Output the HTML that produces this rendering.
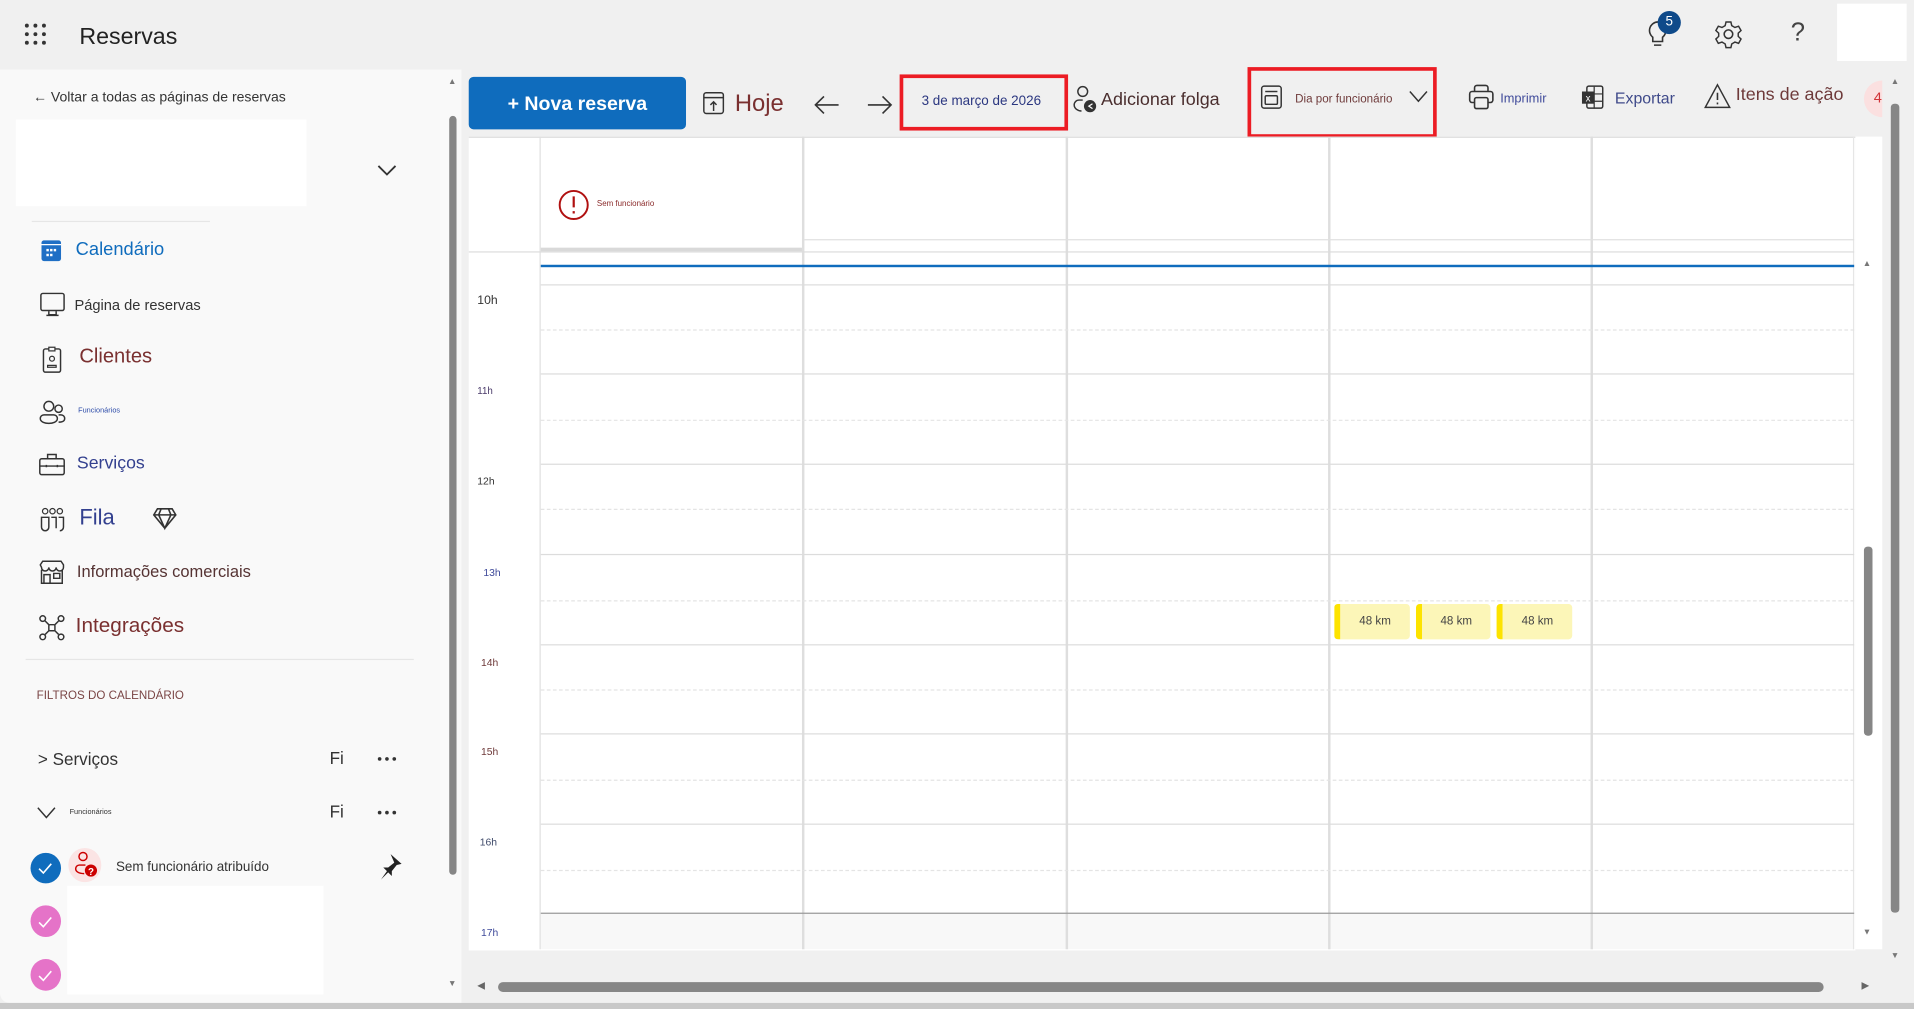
<!DOCTYPE html>
<html><head><meta charset="utf-8">
<style>
html,body{margin:0;padding:0;width:1914px;height:1009px;overflow:hidden;background:#fff;}
#s{position:absolute;left:0;top:0;width:1568px;height:827px;transform-origin:0 0;transform:scale(1.22066,1.2201);background:#f0f0f0;font-family:"Liberation Sans",sans-serif;overflow:hidden;}
.a{position:absolute;white-space:nowrap;}
svg{position:absolute;overflow:visible;}
.hl{position:absolute;left:443px;width:1076px;height:0;border-top:1px solid #dcdcdc;}
.dl{position:absolute;left:443px;width:1076px;height:0;border-top:1px dashed #e4e4e4;}
.vl{position:absolute;top:112px;height:666px;width:0;border-left:2px solid #dedede;}
.tl{position:absolute;left:391px;font-size:9px;}
.ev{position:absolute;top:495px;height:29px;background:#fcf6b8;border-left:5px solid #fde300;border-radius:3px;font-size:9.5px;color:#444;line-height:29px;text-align:center;}
</style></head><body><div id="s">
<!-- header -->
<svg width="20" height="20" style="left:20px;top:19px"><g fill="#333"><circle cx="2" cy="2" r="1.6"/><circle cx="9" cy="2" r="1.6"/><circle cx="16" cy="2" r="1.6"/><circle cx="2" cy="9" r="1.6"/><circle cx="9" cy="9" r="1.6"/><circle cx="16" cy="9" r="1.6"/><circle cx="2" cy="16" r="1.6"/><circle cx="9" cy="16" r="1.6"/><circle cx="16" cy="16" r="1.6"/></g></svg>
<div class="a" style="left:65px;top:20px;font-size:19px;color:#222">Reservas</div>
<svg width="20" height="26" style="left:1348px;top:15px"><path d="M10 3a7 7 0 0 0-4 12.5V19h8v-3.5A7 7 0 0 0 10 3zM7 22h6" fill="none" stroke="#333" stroke-width="1.3"/></svg>
<div class="a" style="left:1358px;top:9px;width:19px;height:19px;border-radius:50%;background:#0f4a8a;color:#fff;font-size:11px;text-align:center;line-height:19px">5</div>
<svg width="24" height="24" style="left:1404px;top:16px"><circle cx="12" cy="12" r="3.5" fill="none" stroke="#333" stroke-width="1.3"/><path d="M10 2h4l.7 3 2.6 1.5 3-1 2 3.5-2.3 2.2v2.6l2.3 2.2-2 3.5-3-1-2.6 1.5-.7 3h-4l-.7-3-2.6-1.5-3 1-2-3.5 2.3-2.2v-2.6L1.7 9l2-3.5 3 1L9.3 5z" fill="none" stroke="#333" stroke-width="1.2"/></svg>
<div class="a" style="left:1467px;top:15px;font-size:21px;color:#444">?</div>
<div class="a" style="left:1505px;top:3px;width:57px;height:47px;background:#fff"></div>
<!-- left panel -->
<div class="a" style="left:0;top:57px;width:378px;height:765px;background:#f9f9f9;border-radius:0 0 0 8px"></div>
<div class="a" style="left:368px;top:95px;width:6px;height:622px;background:#868686;border-radius:3px"></div>
<div class="a" style="left:367px;top:64px;font-size:7px;color:#777">▲</div>
<div class="a" style="left:367px;top:803px;font-size:7px;color:#777">▼</div>
<div class="a" style="left:27px;top:74px;font-size:11.5px;color:#333">← Voltar a todas as páginas de reservas</div>
<div class="a" style="left:13px;top:98px;width:238px;height:71px;background:#fff"></div>
<svg width="16" height="10" style="left:309px;top:135px"><path d="M1 1l7 7 7-7" fill="none" stroke="#333" stroke-width="1.5"/></svg>
<div class="a" style="left:26px;top:181px;width:146px;border-top:1px solid #e6e6e6"></div>
<svg width="18" height="18" style="left:34px;top:197px"><rect x="0" y="0" width="16" height="17" rx="2" fill="#1f6fc5"/><rect x="0" y="3" width="16" height="1" fill="#fff"/><g fill="#fff"><rect x="4" y="7" width="2" height="2"/><rect x="7" y="7" width="2" height="2"/><rect x="10" y="7" width="2" height="2"/><rect x="4" y="11" width="2" height="2"/><rect x="7" y="11" width="2" height="2"/></g></svg>
<div class="a" style="left:62px;top:196px;font-size:15px;color:#0f6cbd">Calendário</div>
<svg width="20" height="20" style="left:33px;top:240px"><rect x="0.5" y="0.5" width="19" height="14" rx="1.5" fill="none" stroke="#333" stroke-width="1.2"/><path d="M7 15v3h6v-3M5 18.5h10" fill="none" stroke="#333" stroke-width="1.2"/></svg>
<div class="a" style="left:61px;top:243px;font-size:12px;color:#333">Página de reservas</div>
<svg width="16" height="22" style="left:35px;top:284px"><rect x="0.6" y="2" width="14" height="19" rx="1.5" fill="none" stroke="#333" stroke-width="1.2"/><rect x="5" y="0.6" width="5" height="3" fill="#f9f9f9" stroke="#333" stroke-width="1"/><circle cx="7.6" cy="10" r="2" fill="none" stroke="#333"/><path d="M4 17v-1.5h7V17z" fill="none" stroke="#333"/></svg>
<div class="a" style="left:65px;top:283px;font-size:16.5px;color:#7a3030">Clientes</div>
<svg width="22" height="20" style="left:32px;top:328px"><circle cx="8" cy="5" r="4" fill="none" stroke="#333" stroke-width="1.2"/><circle cx="16" cy="7" r="3" fill="none" stroke="#333" stroke-width="1.2"/><path d="M1 15a3 3 0 0 1 3-3h8a3 3 0 0 1 3 3c0 3-4 4-7 4s-7-1-7-4zM16 12h2a3 3 0 0 1 3 3c0 2-2 3-5 3" fill="none" stroke="#333" stroke-width="1.2"/></svg>
<div class="a" style="left:64px;top:334px;font-size:6px;color:#2b4aa8">Funcionários</div>
<svg width="22" height="20" style="left:32px;top:371px"><rect x="0.6" y="5" width="20" height="13" rx="1.5" fill="none" stroke="#333" stroke-width="1.2"/><path d="M7 5V1.5h7V5M1 11h20M6 10v2M15 10v2" fill="none" stroke="#333" stroke-width="1.2"/></svg>
<div class="a" style="left:63px;top:372px;font-size:14.5px;color:#33408f">Serviços</div>
<svg width="22" height="20" style="left:33px;top:416px"><circle cx="4" cy="3" r="2.2" fill="none" stroke="#333"/><circle cx="10" cy="3" r="2.2" fill="none" stroke="#333"/><circle cx="16" cy="3" r="2.2" fill="none" stroke="#333"/><path d="M1 8h6v8a3 3 0 0 1-6 0zM9 8h4v9M15 8h4v8a3 3 0 0 1-3 3" fill="none" stroke="#333" stroke-width="1.2"/></svg>
<div class="a" style="left:65px;top:414px;font-size:18px;color:#33408f">Fila</div>
<svg width="20" height="18" style="left:125px;top:416px"><path d="M4 1h12l3 5-9 11L1 6z M1 6h18M7 1l-2 5 5 11 5-11-2-5" fill="none" stroke="#333" stroke-width="1.3"/></svg>
<svg width="22" height="22" style="left:32px;top:459px"><path d="M2 8V19h17V8M1 4l2-3h15l2 3v2a3 3 0 0 1-6 0 3 3 0 0 1-6 0 3 3 0 0 1-6 0z M4 19v-7h5v7M12 11h5v4h-5z" fill="none" stroke="#333" stroke-width="1.2"/></svg>
<div class="a" style="left:63px;top:461px;font-size:13.5px;color:#553333">Informações comerciais</div>
<svg width="22" height="22" style="left:32px;top:504px"><g fill="none" stroke="#333" stroke-width="1.2"><circle cx="3" cy="3" r="2.3"/><circle cx="18" cy="3" r="2.3"/><circle cx="3" cy="18" r="2.3"/><circle cx="18" cy="18" r="2.3"/><rect x="8" y="8" width="5" height="5" rx="1"/><path d="M5 5l3 3M16 5l-3 3M5 16l3-3M16 16l-3-3"/></g></svg>
<div class="a" style="left:62px;top:503px;font-size:17px;color:#7a3030">Integrações</div>
<div class="a" style="left:21px;top:540px;width:318px;border-top:1px solid #e6e6e6"></div>
<div class="a" style="left:30px;top:565px;font-size:9.5px;color:#7a4545">FILTROS DO CALENDÁRIO</div>
<div class="a" style="left:31px;top:614px;font-size:14px;color:#333">&gt; Serviços</div>
<div class="a" style="left:270px;top:613px;font-size:14px;color:#333">Fi</div>
<svg width="20" height="4" style="left:309px;top:620px"><g fill="#333"><circle cx="2" cy="2" r="1.5"/><circle cx="8" cy="2" r="1.5"/><circle cx="14" cy="2" r="1.5"/></g></svg>
<svg width="16" height="10" style="left:30px;top:661px"><path d="M1 1l7 8 7-8" fill="none" stroke="#333" stroke-width="1.2"/></svg>
<div class="a" style="left:57px;top:663px;font-size:6px;color:#333">Funcionários</div>
<div class="a" style="left:270px;top:657px;font-size:14px;color:#333">Fi</div>
<svg width="20" height="4" style="left:309px;top:664px"><g fill="#333"><circle cx="2" cy="2" r="1.5"/><circle cx="8" cy="2" r="1.5"/><circle cx="14" cy="2" r="1.5"/></g></svg>
<div class="a" style="left:25px;top:699px;width:25px;height:25px;border-radius:50%;background:#0f6cbd"></div>
<svg width="12" height="10" style="left:31px;top:707px"><path d="M1 5l3.5 3.5L11 1" fill="none" stroke="#fff" stroke-width="1.3"/></svg>
<div class="a" style="left:56px;top:695px;width:27px;height:28px;border-radius:50%;background:#fbe4e4"></div>
<svg width="20" height="22" style="left:61px;top:698px"><circle cx="7" cy="4" r="3.3" fill="none" stroke="#c00" stroke-width="1.2"/><path d="M9 11H4a3 3 0 0 0-3 3c0 2 2 4 7 4" fill="none" stroke="#c00" stroke-width="1.2"/><circle cx="13.5" cy="15.5" r="5" fill="#c00"/><text x="13.5" y="19" font-size="8" fill="#fff" text-anchor="middle" font-family="Liberation Sans" font-weight="bold">?</text></svg>
<div class="a" style="left:95px;top:705px;font-size:11px;color:#333">Sem funcionário atribuído</div>
<svg width="20" height="22" style="left:310px;top:699px"><path d="M10 1l9 8-4 1-4 5 0 4-3-3-6 6 5-7-3-3 4 0 5-4z" fill="#222"/></svg>
<div class="a" style="left:55px;top:726px;width:210px;height:89px;background:#fff"></div>
<div class="a" style="left:25px;top:742px;width:25px;height:26px;border-radius:50%;background:#e573c8"></div>
<svg width="12" height="10" style="left:31px;top:751px"><path d="M1 5l3.5 3.5L11 1" fill="none" stroke="#fff" stroke-width="1.3"/></svg>
<div class="a" style="left:25px;top:786px;width:25px;height:26px;border-radius:50%;background:#e573c8"></div>
<svg width="12" height="10" style="left:31px;top:795px"><path d="M1 5l3.5 3.5L11 1" fill="none" stroke="#fff" stroke-width="1.3"/></svg>
<div class="a" style="left:0;top:822px;width:1568px;height:5px;background:#c8c8c8"></div>
<!-- toolbar -->
<div class="a" style="left:384px;top:63px;width:178px;height:43px;background:#0f6cbd;border-radius:4px;color:#fff;font-size:16px;font-weight:bold;text-align:center;line-height:45px">+ Nova reserva</div>
<svg width="18" height="20" style="left:576px;top:75px"><rect x="0.6" y="1" width="16" height="17" rx="2" fill="none" stroke="#333" stroke-width="1.2"/><path d="M1 5h16M8.6 16V9M6 11l2.6-2.6L11 11" fill="none" stroke="#333" stroke-width="1.2"/></svg>
<div class="a" style="left:602px;top:74px;font-size:19.5px;color:#7a3030">Hoje</div>
<svg width="22" height="16" style="left:666px;top:78px"><path d="M21 8H2M9 1L2 8l7 7" fill="none" stroke="#333" stroke-width="1.3"/></svg>
<svg width="22" height="16" style="left:710px;top:78px"><path d="M1 8h19M13 1l7 7-7 7" fill="none" stroke="#333" stroke-width="1.3"/></svg>
<div class="a" style="left:737px;top:61px;width:132px;height:40px;border:3px solid #ec1c24"></div>
<div class="a" style="left:755px;top:77px;font-size:11px;color:#2b3780">3 de março de 2026</div>
<svg width="20" height="24" style="left:879px;top:70px"><circle cx="8" cy="5" r="4" fill="none" stroke="#333" stroke-width="1.2"/><path d="M8 12H5a4 4 0 0 0-4 4c0 3 3 5 6 5" fill="none" stroke="#333" stroke-width="1.2"/><circle cx="14" cy="17" r="5" fill="#333"/><path d="M16 15l-3 2 3 2" stroke="#fff" fill="none"/></svg>
<div class="a" style="left:902px;top:74px;font-size:14.7px;color:#4a2e2e">Adicionar folga</div>
<div class="a" style="left:1022px;top:55px;width:149px;height:52px;border:3px solid #ec1c24"></div>
<svg width="18" height="20" style="left:1033px;top:70px"><rect x="0.6" y="0.6" width="16" height="18" rx="2" fill="none" stroke="#333" stroke-width="1.2"/><path d="M3.5 5h10" stroke="#333" stroke-width="1.2"/><rect x="3.5" y="8.5" width="10" height="7" rx="1" fill="none" stroke="#333" stroke-width="1.2"/></svg>
<div class="a" style="left:1061px;top:76px;font-size:9.5px;color:#6e3a3a">Dia por funcionário</div>
<svg width="16" height="10" style="left:1154px;top:74px"><path d="M1 1l7 8 7-8" fill="none" stroke="#333" stroke-width="1.2"/></svg>
<svg width="22" height="22" style="left:1203px;top:69px"><path d="M5 6V3a2 2 0 0 1 2-2h7a2 2 0 0 1 2 2v3M5 15H3a2 2 0 0 1-2-2V8a2 2 0 0 1 2-2h15a2 2 0 0 1 2 2v5a2 2 0 0 1-2 2h-2" fill="none" stroke="#333" stroke-width="1.3"/><rect x="5" y="11" width="11" height="9" rx="1.5" fill="none" stroke="#333" stroke-width="1.3"/></svg>
<div class="a" style="left:1229px;top:75px;font-size:10.5px;color:#3f4a9a">Imprimir</div>
<svg width="18" height="20" style="left:1296px;top:70px"><rect x="4" y="0.6" width="13" height="18" rx="1.5" fill="none" stroke="#333" stroke-width="1.2"/><path d="M10 1v18M4 7h13M4 13h13" stroke="#333"/><rect x="0" y="5" width="10" height="10" fill="#333"/><text x="5" y="13" font-size="8" fill="#fff" text-anchor="middle" font-family="Liberation Sans">x</text></svg>
<div class="a" style="left:1323px;top:73px;font-size:13px;color:#3f4a8a">Exportar</div>
<svg width="22" height="22" style="left:1396px;top:68px"><path d="M11 1.5L21 20H1z" fill="none" stroke="#333" stroke-width="1.2"/><path d="M11 8v6M11 16v1.5" stroke="#333" stroke-width="1.3"/></svg>
<div class="a" style="left:1422px;top:70px;font-size:14.7px;color:#6e3a3a">Itens de ação</div>
<div class="a" style="left:1527px;top:66px;width:30px;height:30px;border-radius:50%;background:#fbe0e0"></div>
<div class="a" style="left:1535px;top:73px;font-size:12px;color:#d13438">4</div>
<div class="a" style="left:1542px;top:57px;width:26px;height:50px;background:#f0f0f0"></div>
<!-- outer right scrollbar -->
<div class="a" style="left:1549px;top:85px;width:7px;height:663px;background:#868686;border-radius:3px"></div>
<div class="a" style="left:1549px;top:64px;font-size:7px;color:#777">▲</div>
<div class="a" style="left:1549px;top:780px;font-size:7px;color:#777">▼</div>
<!-- calendar -->
<div class="a" style="left:384px;top:112px;width:1136px;height:666px;background:#fff;border-top:1px solid #ddd"></div>
<div class="a" style="left:443px;top:748px;width:1076px;height:30px;background:#f8f8f8"></div>
<div class="vl" style="left:442px;border-left:1px solid #e0e0e0"></div>
<div class="vl" style="left:657px"></div>
<div class="vl" style="left:873px"></div>
<div class="vl" style="left:1088px"></div>
<div class="vl" style="left:1303px"></div>
<div class="vl" style="left:1518px;border-left:1px solid #e6e6e6"></div>
<div class="a" style="left:659px;top:196px;width:860px;border-top:1px solid #e0e0e0"></div>
<div class="a" style="left:443px;top:203px;width:214px;height:3px;background:#d9d9d9"></div>
<div class="a" style="left:384px;top:206px;width:1135px;border-top:1px solid #dcdcdc"></div>
<div class="a" style="left:443px;top:217px;width:1076px;height:2px;background:#0f6cbd"></div>
<div class="hl" style="top:233px"></div>
<div class="dl" style="top:270px"></div>
<div class="hl" style="top:306px"></div>
<div class="dl" style="top:344px"></div>
<div class="hl" style="top:380px"></div>
<div class="dl" style="top:417px"></div>
<div class="hl" style="top:454px"></div>
<div class="dl" style="top:492px"></div>
<div class="hl" style="top:528px"></div>
<div class="dl" style="top:565px"></div>
<div class="hl" style="top:601px"></div>
<div class="dl" style="top:639px"></div>
<div class="hl" style="top:675px"></div>
<div class="dl" style="top:713px"></div>
<div class="a" style="left:443px;top:748px;width:1076px;border-top:1px solid #999"></div>
<div class="tl" style="top:241px;font-size:10px;color:#333">10h</div>
<div class="tl" style="top:316px;font-size:8px;color:#4a3a6a">11h</div>
<div class="tl" style="top:389px;font-size:8.5px;color:#333">12h</div>
<div class="tl" style="top:464px;font-size:8.5px;color:#3f4a9a;left:396px">13h</div>
<div class="tl" style="top:538px;font-size:8.5px;color:#6e3a3a;left:394px">14h</div>
<div class="tl" style="top:611px;font-size:8.5px;color:#6e3a3a;left:394px">15h</div>
<div class="tl" style="top:685px;font-size:8.5px;color:#3f4a6a;left:393px">16h</div>
<div class="tl" style="top:759px;font-size:8.5px;color:#3f4a9a;left:394px">17h</div>
<svg width="26" height="26" style="left:457px;top:155px"><circle cx="13" cy="13" r="11.5" fill="none" stroke="#b01010" stroke-width="1.6"/><path d="M13 6v9M13 18v2" stroke="#b01010" stroke-width="1.8"/></svg>
<div class="a" style="left:489px;top:164px;font-size:6.5px;color:#8a2a2a">Sem funcionário</div>
<div class="ev" style="left:1093px;width:57px">48 km</div>
<div class="ev" style="left:1160px;width:56px">48 km</div>
<div class="ev" style="left:1226px;width:57px">48 km</div>
<!-- inner scrollbar -->
<div class="a" style="left:1520px;top:112px;width:22px;height:666px;background:#fff"></div>
<div class="a" style="left:1526px;top:213px;font-size:7px;color:#777">▲</div>
<div class="a" style="left:1526px;top:761px;font-size:7px;color:#777">▼</div>
<div class="a" style="left:1527px;top:448px;width:7px;height:155px;background:#868686;border-radius:3px"></div>
<!-- horizontal scrollbar -->
<div class="a" style="left:408px;top:805px;width:1086px;height:8px;background:#868686;border-radius:4px"></div>
<div class="a" style="left:391px;top:803px;font-size:8px;color:#666">◀</div>
<div class="a" style="left:1525px;top:803px;font-size:8px;color:#666">▶</div>
</div></body></html>
